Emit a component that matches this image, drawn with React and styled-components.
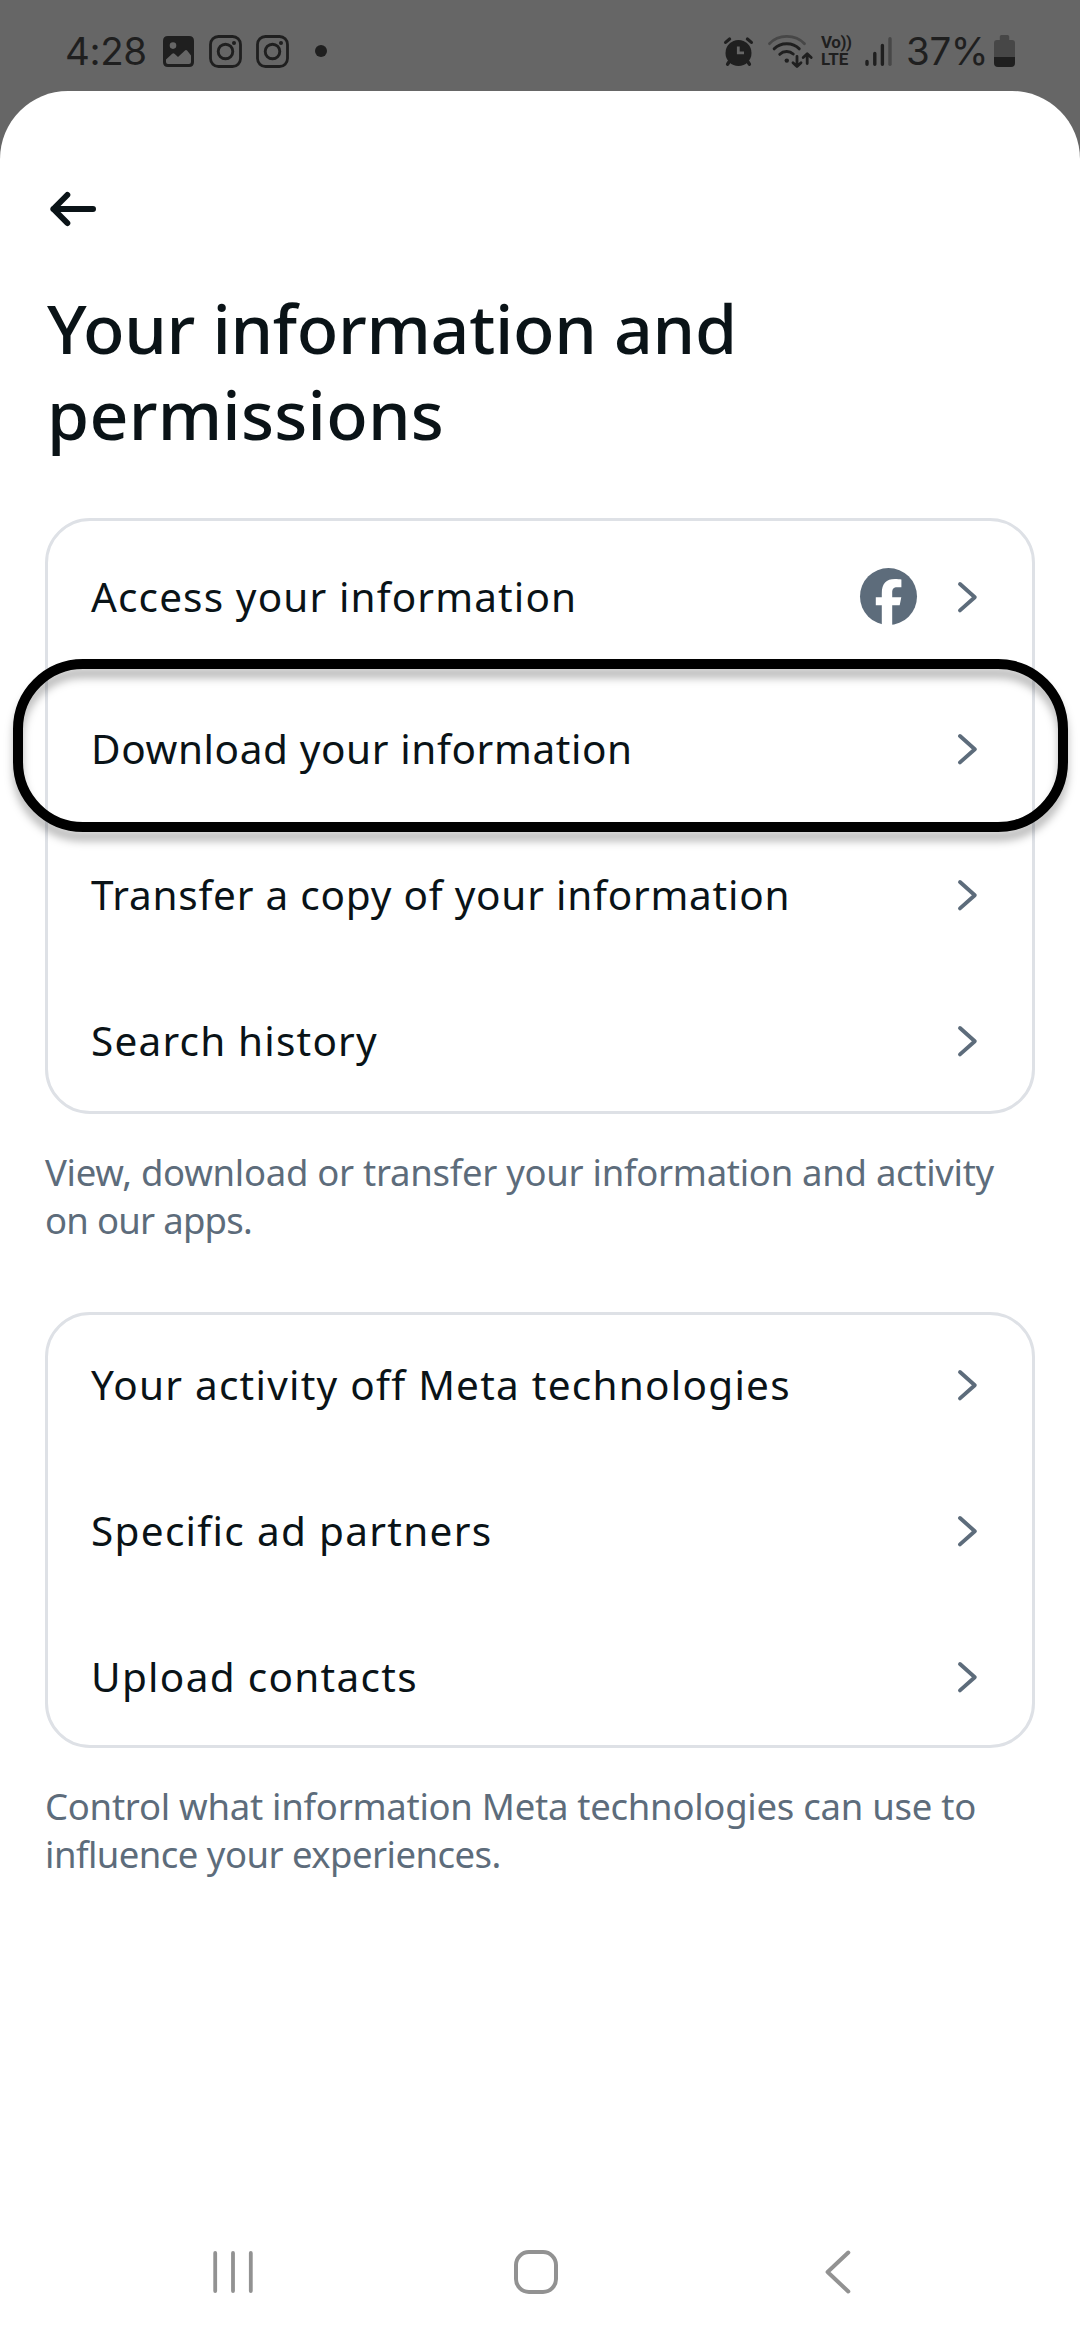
import React from "react";
import styled, { createGlobalStyle } from "styled-components";

const ink = "#0a1317";
const slate = "#5d6c7b";
const statusInk = "#1f1f1f";
const statusDim = "#474747";
const navInk = "#929292";

const GlobalStyle = createGlobalStyle`
  * { box-sizing: border-box; }
  body { margin: 0; background: #666; }
`;

const Screen = styled.div`
  width: 1080px;
  height: 2340px;
  display: flex;
  flex-direction: column;
  background: #666;
  overflow: hidden;
  font-family: "Noto Sans", sans-serif;
  color: ${ink};
`;

const StatusBar = styled.header`
  flex: none;
  height: 91px;
  padding: 11px 65px 0 65px;
  display: flex;
  justify-content: space-between;
  align-items: center;
  color: ${statusInk};
`;

const StatusGroup = styled.div`
  display: flex;
  align-items: center;
  gap: ${(p) => p.$gap}px;
`;

const StatusText = styled.span`
  font: 400 38.5px/46px Inter, "Liberation Sans", sans-serif;
  letter-spacing: -0.4px;
  width: ${(p) => p.$width}px;
  white-space: nowrap;
`;

const Volte = styled.span`
  width: 32px;
  display: flex;
  flex-direction: column;
  font-family: Roboto, "Liberation Sans", sans-serif;
  font-weight: 700;
  font-size: 17px;
  line-height: 17px;
  white-space: nowrap;
`;

const VolteTop = styled.span`
  letter-spacing: -0.4px;
`;

const DotSlot = styled.span`
  padding-left: 12px;
`;

const Icon = styled.svg`
  display: block;
  flex: none;
  overflow: visible;
`;

const Sheet = styled.main`
  flex: 1;
  display: flex;
  flex-direction: column;
  padding: 95px 45px 0;
  background: #fff;
  border-radius: 68px 68px 0 0;
`;

const BackButton = styled.button`
  width: 56px;
  height: 46px;
  padding: 0;
  border: 0;
  background: none;
  display: flex;
  align-items: center;
  justify-content: center;
`;

const Title = styled.h1`
  margin: 53px 0 61px 2px;
  font-size: 68px;
  line-height: 86px;
  font-weight: 540;
`;

const Line = styled.span`
  display: block;
  letter-spacing: ${(p) => p.$track}px;
  white-space: nowrap;
`;

const Card = styled.section`
  display: grid;
  gap: 9px;
  padding: ${(p) => p.$pad};
  width: 990px;
  border: 3px solid #dee1e6;
  border-radius: 45px;
`;

const Row = styled.div`
  position: relative;
  display: flex;
  align-items: center;
  height: ${(p) => (p.$tall ? 149 : 137)}px;
  padding: 0 55px 0 43px;
`;

const RowLabel = styled.span`
  flex: 1;
  font-size: 40.5px;
  line-height: 54px;
  letter-spacing: ${(p) => p.$track}px;
  white-space: nowrap;
`;

const RowIcons = styled.span`
  display: flex;
  align-items: center;
  gap: 41px;
`;

const Highlight = styled.div`
  position: absolute;
  top: -21px;
  bottom: -15px;
  left: -35px;
  right: -36px;
  border: 10px solid #000;
  border-radius: 70px;
  filter: drop-shadow(0 9px 4px rgba(0, 0, 0, 0.28));
  pointer-events: none;
`;

const Caption = styled.p`
  margin: 34px 0 ${(p) => p.$after}px;
  font-size: 36.5px;
  line-height: 48px;
  color: ${slate};
`;

const NavBar = styled.nav`
  margin-top: auto;
  height: 136px;
  padding: 0 167px 0 158px;
  display: flex;
  justify-content: space-between;
  align-items: center;
`;

const NavButton = styled.span`
  width: 60px;
  height: 60px;
  display: flex;
  align-items: center;
  justify-content: center;
`;

const HomeShape = styled.span`
  width: 44px;
  height: 44px;
  border: 4px solid ${navInk};
  border-radius: 15px;
`;

const GalleryIcon = () => (
  <Icon width="32" height="31" viewBox="0 0 32 31">
    <path
      fillRule="evenodd"
      fill={statusInk}
      d="M5 0H26Q31 0 31 5V26Q31 31 26 31H5Q0 31 0 26V5Q0 0 5 0ZM10 6.3A3.3 3.3 0 1 0 10 12.9A3.3 3.3 0 1 0 10 6.3ZM3 23.5V26Q3 28 5 28H26Q28 28 28 26V19.5L24.3 14.8Q23 13.4 21.7 14.8L15 21L11.5 17.8Q10.3 16.9 9.2 17.8Z"
    />
  </Icon>
);

const InstagramIcon = () => (
  <Icon width="33" height="33" viewBox="0 0 33 33" fill="none" stroke={statusInk}>
    <rect x="1.5" y="1.5" width="30" height="30" rx="8" strokeWidth="2.8" />
    <circle cx="16.5" cy="16.5" r="7.3" strokeWidth="2.9" />
    <circle cx="25" cy="8" r="2" fill={statusInk} stroke="none" />
  </Icon>
);

const DotIcon = () => (
  <Icon width="12" height="12" viewBox="0 0 12 12">
    <circle cx="6" cy="6" r="6" fill={statusInk} />
  </Icon>
);

const AlarmIcon = () => (
  <Icon width="29" height="29" viewBox="0 0 29 29" fill="none" strokeLinecap="round">
    <circle cx="14.5" cy="16" r="13" fill={statusInk} />
    <path d="M5 25L3.6 27.2M24 25L25.4 27.2" stroke={statusInk} strokeWidth="3.4" />
    <path d="M1.6 5.4L5.6 2M27.4 5.4L23.4 2" stroke={statusInk} strokeWidth="3.2" />
    <path d="M14.3 9.5V15.8H20" stroke="#666" strokeWidth="2.8" strokeLinecap="butt" />
  </Icon>
);

const WifiIcon = () => (
  <Icon width="45" height="33" viewBox="0 0 45 33" fill="none" strokeLinecap="round" strokeLinejoin="round">
    <path d="M1.5 8.7C10-1.2 27.5-1.2 36.5 8.7" stroke={statusDim} strokeWidth="2.8" />
    <path d="M6.2 13.8C12.5 7 25 7 31.2 13.8" stroke={statusInk} strokeWidth="3" />
    <path d="M11.8 19.3C15.6 15.6 21.5 15.6 25.2 19" stroke={statusInk} strokeWidth="3" />
    <circle cx="18.8" cy="25.6" r="2.2" fill={statusInk} />
    <path
      d="M29 21.5V31M25 27.8L29 31.6L33 27.8M39.2 28.5V19.5M35.2 22.5L39.2 18.8L43.2 22.5"
      stroke={statusInk}
      strokeWidth="2.8"
    />
  </Icon>
);

const SignalIcon = () => (
  <Icon width="27" height="29" viewBox="0 0 27 29" strokeWidth="3.4" strokeLinecap="round" stroke={statusInk}>
    <path d="M2 24.5V27.3M9.8 16.5V27.3M17.4 8.5V27.3" />
    <path d="M25 1.8V27.3" stroke={statusDim} />
  </Icon>
);

const BatteryIcon = () => (
  <Icon width="21" height="32" viewBox="0 0 21 32">
    <path
      d="M7.5 0H13.5Q15.2 0 15.2 1.6V5H18Q21 5 21 8V22H0V8Q0 5 3 5H5.8V1.6Q5.8 0 7.5 0Z"
      fill={statusDim}
    />
    <path d="M0 22H21V28Q21 32 17 32H4Q0 32 0 28Z" fill={statusInk} />
  </Icon>
);

const BackArrow = () => (
  <Icon
    width="46"
    height="34"
    viewBox="0 0 46 34"
    fill="none"
    stroke={ink}
    strokeWidth="6"
    strokeLinecap="round"
    strokeLinejoin="round"
  >
    <path d="M43 17H3.4M17.3 3L3.4 17L17.3 31" />
  </Icon>
);

const Chevron = () => (
  <Icon
    width="19"
    height="30"
    viewBox="0 0 19 30"
    fill="none"
    stroke={slate}
    strokeWidth="3.9"
    strokeLinecap="round"
    strokeLinejoin="round"
  >
    <path d="M2 2L16.8 15.2L2 28.4" />
  </Icon>
);

const FacebookIcon = () => (
  <Icon width="57" height="57" viewBox="0 0 57 57">
    <circle cx="28.5" cy="28.5" r="28.5" fill={slate} />
    <path
      d="M21.8 58V37.3H15.8V29.2H21.8V25.2C21.8 15.6 26.2 11 35 11C37.3 11 39.8 11.2 41.4 11.6V19.3H37.2C33.6 19.3 32.2 20.9 32.2 24.6V29.2H41.3L39.7 37.3H32.2V58Z"
      fill="#fff"
    />
  </Icon>
);

const SettingRow = ({ label, track, tall, facebook, highlighted }) => (
  <Row $tall={tall}>
    <RowLabel $track={track}>{label}</RowLabel>
    <RowIcons>
      {facebook && <FacebookIcon />}
      <Chevron />
    </RowIcons>
    {highlighted && <Highlight />}
  </Row>
);

export default function App() {
  return (
    <>
      <GlobalStyle />
      <Screen>
        <StatusBar>
          <StatusGroup $gap={14}>
            <StatusText $width={84}>4:28</StatusText>
            <GalleryIcon />
            <InstagramIcon />
            <InstagramIcon />
            <DotSlot>
              <DotIcon />
            </DotSlot>
          </StatusGroup>
          <StatusGroup $gap={14}>
            <StatusGroup $gap={8}>
              <StatusGroup $gap={15}>
                <AlarmIcon />
                <WifiIcon />
              </StatusGroup>
              <StatusGroup $gap={12}>
                <Volte>
                  <VolteTop>Vo))</VolteTop>
                  <span>LTE</span>
                </Volte>
                <SignalIcon />
              </StatusGroup>
            </StatusGroup>
            <StatusGroup $gap={7}>
              <StatusText $width={81}>37%</StatusText>
              <BatteryIcon />
            </StatusGroup>
          </StatusGroup>
        </StatusBar>
        <Sheet>
          <BackButton aria-label="Back">
            <BackArrow />
          </BackButton>
          <Title>
            <Line $track={-0.3}>Your information and</Line>
            <Line $track={0.25}>permissions</Line>
          </Title>
          <Card $pad="1px 0 2px">
            <SettingRow label="Access your information" track={1.13} tall facebook />
            <SettingRow label="Download your information" track={0.61} highlighted />
            <SettingRow label="Transfer a copy of your information" track={0.77} />
            <SettingRow label="Search history" track={1.2} />
          </Card>
          <Caption $after={68}>
            <Line $track={-0.29}>View, download or transfer your information and activity</Line>
            <Line $track={-0.74}>on our apps.</Line>
          </Caption>
          <Card $pad="1px 0 0">
            <SettingRow label="Your activity off Meta technologies" track={1.25} />
            <SettingRow label="Specific ad partners" track={1.3} />
            <SettingRow label="Upload contacts" track={1.3} />
          </Card>
          <Caption $after={0}>
            <Line $track={-0.27}>Control what information Meta technologies can use to</Line>
            <Line $track={-0.54}>influence your experiences.</Line>
          </Caption>
          <NavBar>
            <NavButton>
              <Icon width="40" height="42" viewBox="0 0 40 42" stroke={navInk} strokeWidth="3.8" strokeLinecap="round">
                <path d="M2.2 2V40M20 2V40M37.8 2V40" />
              </Icon>
            </NavButton>
            <NavButton>
              <HomeShape />
            </NavButton>
            <NavButton>
              <Icon
                width="26"
                height="44"
                viewBox="0 0 26 44"
                fill="none"
                stroke={navInk}
                strokeWidth="4"
                strokeLinecap="round"
                strokeLinejoin="round"
              >
                <path d="M23.3 2.5L2.6 22L23.3 41.5" />
              </Icon>
            </NavButton>
          </NavBar>
        </Sheet>
      </Screen>
    </>
  );
}
